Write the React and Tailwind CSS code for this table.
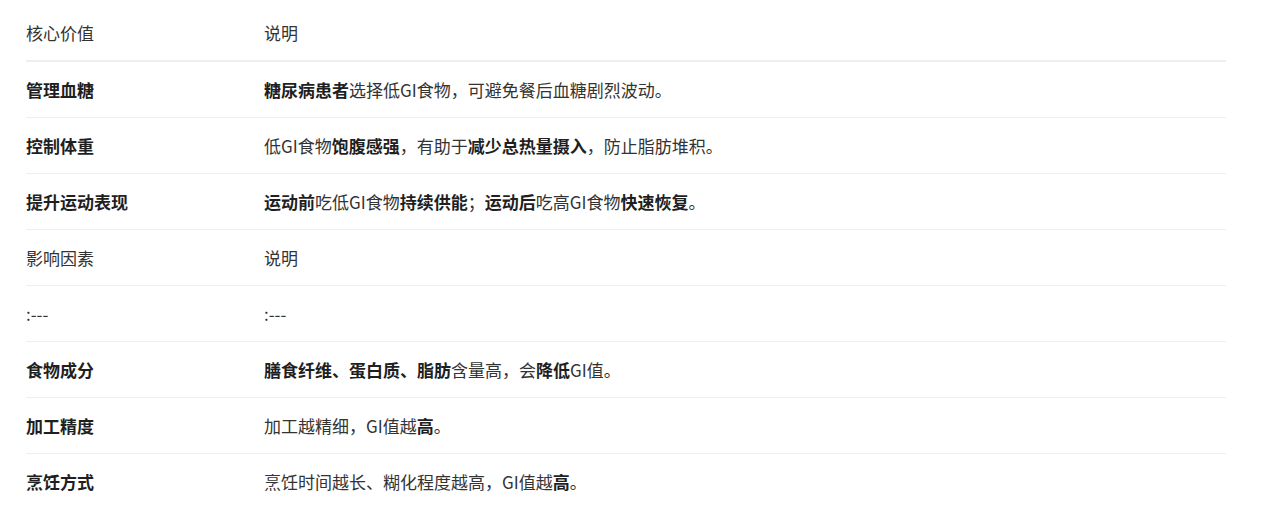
import React from "react";

const B = ({ children }) => <strong className="font-bold text-[#1f1f1f]">{children}</strong>;

const rows = [
  { a: <B>管理血糖</B>, b: <><B>糖尿病患者</B>选择低GI食物，可避免餐后血糖剧烈波动。</> },
  { a: <B>控制体重</B>, b: <>低GI食物<B>饱腹感强</B>，有助于<B>减少总热量摄入</B>，防止脂肪堆积。</> },
  { a: <B>提升运动表现</B>, b: <><B>运动前</B>吃低GI食物<B>持续供能</B>；<B>运动后</B>吃高GI食物<B>快速恢复</B>。</> },
  { a: "影响因素", b: "说明" },
  { a: ":---", b: ":---" },
  { a: <B>食物成分</B>, b: <><B>膳食纤维、蛋白质、脂肪</B>含量高，会<B>降低</B>GI值。</> },
  { a: <B>加工精度</B>, b: <>加工越精细，GI值越<B>高</B>。</> },
  { a: <B>烹饪方式</B>, b: <>烹饪时间越长、糊化程度越高，GI值越<B>高</B>。</> },
];

export default function App() {
  return (
    <div
      className="bg-white w-[1267px] h-[530px] text-[#333] text-[17px]"
      style={{ fontFamily: '"Noto Sans CJK SC", "Noto Sans", sans-serif' }}
    >
      <div className="ml-[26px] pt-[5px] w-[1200px]">
        <div className="grid grid-cols-[238px_1fr] h-[57px] items-center border-b-2 border-[#efefef]">
          <div>核心价值</div>
          <div>说明</div>
        </div>
        {rows.map((r, i) => (
          <div
            key={i}
            className={
              "grid grid-cols-[238px_1fr] items-center " +
              (i < rows.length - 1 ? "h-[56px] border-b border-[#efefef]" : "h-[55px]")
            }
          >
            <div className="whitespace-nowrap">{r.a}</div>
            <div className="whitespace-nowrap">{r.b}</div>
          </div>
        ))}
      </div>
    </div>
  );
}
